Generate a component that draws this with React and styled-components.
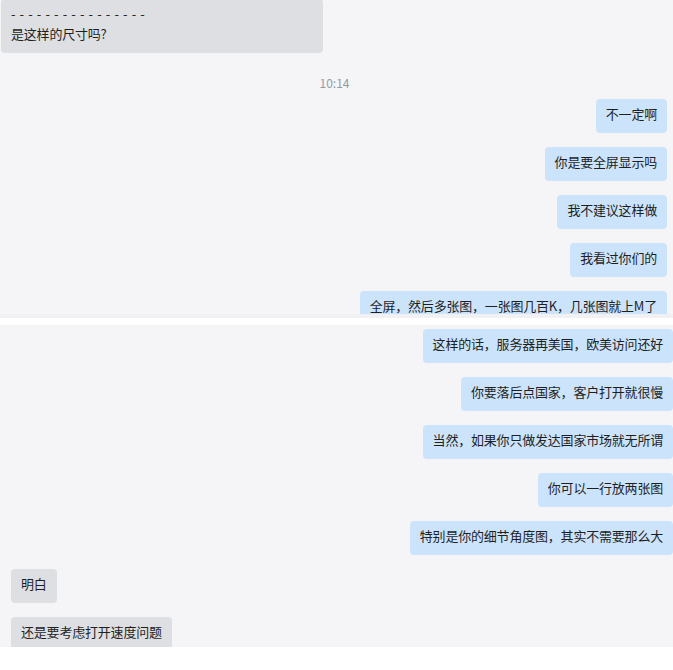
import React from 'react';
import styled, { createGlobalStyle } from 'styled-components';

const GlobalStyle = createGlobalStyle`
  html, body {
    margin: 0;
    padding: 0;
    background: #ffffff;
  }
  body {
    font-family: "Noto Sans CJK SC", "Noto Sans", sans-serif;
    color: #1f1f1f;
  }
`;

const Page = styled.div`
  width: 673px;
  height: 670px;
  display: flex;
  flex-direction: column;
  background: #ffffff;
`;

const Panel = styled.section`
  height: ${({ height }) => height}px;
  overflow: hidden;
  background: #f5f5f7;
  display: flex;
  flex-direction: column;
  gap: 14px;
  padding: ${({ pad }) => pad};
  box-sizing: border-box;
  flex-shrink: 0;
`;

const Seam = styled.div`
  height: 4px;
  background: #f1f1f3;
  flex-shrink: 0;
`;

const Gap = styled.div`
  height: 7px;
  flex-shrink: 0;
  background: #ffffff;
`;

const Row = styled.div`
  display: flex;
  justify-content: ${({ mine }) => (mine ? 'flex-end' : 'flex-start')};
  flex-shrink: 0;
`;

const Bubble = styled.div`
  background: ${({ mine }) => (mine ? '#cce4fb' : '#dedfe2')};
  border-radius: 4px;
  padding: 5px 10px 9px;
  font-size: 13px;
  line-height: 20px;
  letter-spacing: -0.2px;
  white-space: nowrap;
  width: ${({ width }) => (width ? `${width}px` : 'auto')};
  box-sizing: border-box;
`;

const Dashes = styled.div`
  letter-spacing: 0.6px;
`;

const Time = styled.div`
  text-align: center;
  font-size: 12px;
  line-height: 18px;
  color: #939aa6;
  margin: 7px 0 -7px;
  padding-left: 1px;
  flex-shrink: 0;
`;

const topMine = [
  '不一定啊',
  '你是要全屏显示吗',
  '我不建议这样做',
  '我看过你们的',
  '全屏，然后多张图，一张图几百K，几张图就上M了',
];

const bottom = [
  { mine: true, text: '这样的话，服务器再美国，欧美访问还好' },
  { mine: true, text: '你要落后点国家，客户打开就很慢' },
  { mine: true, text: '当然，如果你只做发达国家市场就无所谓' },
  { mine: true, text: '你可以一行放两张图' },
  { mine: true, text: '特别是你的细节角度图，其实不需要那么大' },
  { mine: false, text: '明白' },
  { mine: false, text: '还是要考虑打开速度问题' },
];

export default function App() {
  return (
    <Page>
      <GlobalStyle />
      <Panel height={314} pad='0 6px 0 1px'>
        <Row>
          <Bubble width={322} style={{ marginTop: -1 }}>
            <Dashes>- - - - - - - - - - - - - - - -</Dashes>
            <div>是这样的尺寸吗?</div>
          </Bubble>
        </Row>
        <Time>10:14</Time>
        {topMine.map((t) => (
          <Row mine key={t}>
            <Bubble mine>{t}</Bubble>
          </Row>
        ))}
      </Panel>
      <Seam />
      <Gap />
      <Panel height={322} pad='4px 0 0 11px'>
        {bottom.map((m) => (
          <Row mine={m.mine} key={m.text}>
            <Bubble mine={m.mine}>{m.text}</Bubble>
          </Row>
        ))}
      </Panel>
    </Page>
  );
}
